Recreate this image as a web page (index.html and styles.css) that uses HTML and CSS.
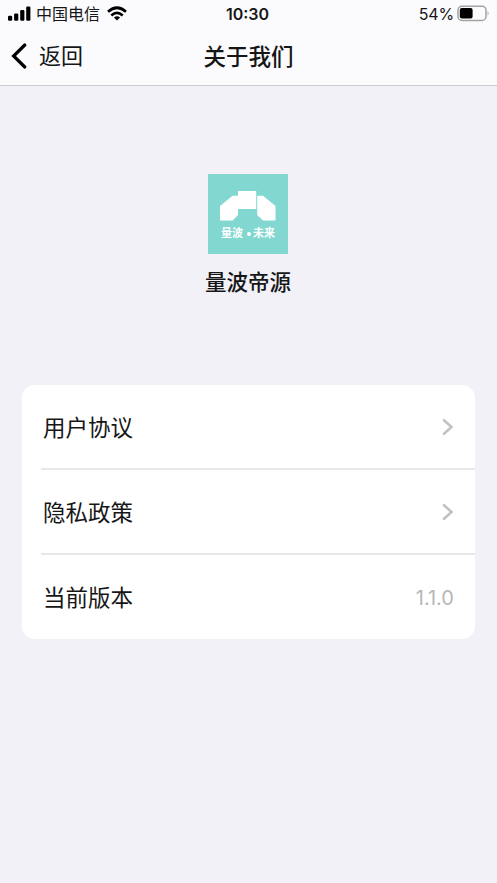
FILE: index.html
```html
<!DOCTYPE html>
<html lang="zh-CN">
<head>
<meta charset="utf-8">
<title>关于我们</title>
<link rel="stylesheet" href="styles.css">
</head>
<body>
<header class="top">
  <div class="status">
    <div class="status-left">
      <svg class="signal" width="23" height="15" viewBox="0 0 23 15"><rect x="0" y="9.8" width="4.2" height="5" rx="1.2"/><rect x="6.1" y="7.5" width="4.2" height="7.3" rx="1.2"/><rect x="12.2" y="4" width="4.2" height="10.8" rx="1.2"/><rect x="18.2" y="0.5" width="4.2" height="14.3" rx="1.2"/></svg>
      <span class="carrier">中国电信</span>
      <svg class="wifi" width="20" height="15" viewBox="0 0 20 15"><g fill="none" stroke="#000" stroke-width="2.7"><path d="M1 5.7Q10-2.2 19 5.7"/><path d="M4.3 9.4Q10 4.4 15.7 9.4"/></g><path d="M6.9 11.6Q10 9.1 13.1 11.6L10 14.6Z"/></svg>
    </div>
    <span class="time">10:30</span>
    <div class="status-right">
      <span class="percent">54%</span>
      <svg class="battery" width="33" height="17" viewBox="0 0 33 17"><rect x="1" y="1.2" width="28" height="14.2" rx="4" fill="none" stroke="#a3a3a5" stroke-width="1.5"/><rect x="2.8" y="3" width="12.8" height="10.6" rx="2"/><path d="M30.6 6Q32.6 8.3 30.6 10.6Z" fill="#a3a3a5"/></svg>
    </div>
  </div>
  <nav class="nav">
    <a class="back">
      <svg width="17" height="28" viewBox="0 0 17 28"><path d="M13.8 3L2.6 14L13.8 25" fill="none" stroke="#000" stroke-width="3.2" stroke-linecap="round" stroke-linejoin="miter"/></svg>
      <span>返回</span>
    </a>
    <h1 class="title">关于我们</h1>
  </nav>
</header>
<main>
  <section class="brand">
    <div class="logo">
      <svg width="56" height="30" viewBox="0 0 56 30" fill="#fff"><path d="M0 15L12.5 4.8H18V24L12.7 29.5H0Z"/><path d="M37.2 4.8H43L55.5 15V29.5H43L37.2 24Z"/><path d="M18 0H36.2V18H18Z"/></svg>
      <div class="logo-text"><span>量波</span><i class="dot"></i><span>未来</span></div>
    </div>
    <h2 class="name">量波帝源</h2>
  </section>
  <ul class="list">
    <li class="row"><span>用户协议</span><svg class="chevron" width="12" height="18" viewBox="0 0 12 18"><path d="M2 2.2L9.5 9L2 15.8"/></svg></li>
    <li class="row"><span>隐私政策</span><svg class="chevron" width="12" height="18" viewBox="0 0 12 18"><path d="M2 2.2L9.5 9L2 15.8"/></svg></li>
    <li class="row"><span>当前版本</span><span class="version">1.1.0</span></li>
  </ul>
</main>
</body>
</html>
```
FILE: styles.css
```css
* { box-sizing: border-box; }
body {
  margin: 0;
  min-height: 883px;
  background: #f2f1f8;
  color: #161617;
  font-family: Inter, "Noto Sans CJK SC", sans-serif;
}
.top {
  height: 86px;
  background: #fbfbfd;
  border-bottom: 1px solid #cdcdd1;
}
.status {
  display: grid;
  grid-template-columns: 1fr auto 1fr;
  align-items: center;
  height: 28px;
  padding: 0 8px 0 8px;
}
.status-left, .status-right { display: flex; align-items: center; }
.status-left svg { margin-bottom: 1px; }
.status-right { justify-content: flex-end; }
.battery { margin: 0 -1px 1px 0; }
.carrier {
  margin: 0 7px 0 5px;
  font-size: 16px;
  line-height: 28px;
}
.time {
  padding-right: 2px;
  font-size: 16px;
  font-weight: 600;
}
.percent { font-size: 16px; margin-right: 3px; letter-spacing: -0.2px; }
.nav {
  display: grid;
  grid-template-columns: 1fr auto 1fr;
  align-items: center;
  height: 57px;
}
.back {
  display: flex;
  align-items: center;
  gap: 11px;
  padding: 0 0 1px 11px;
  font-size: 22px;
  line-height: 32px;
}
.title {
  margin: 0;
  font-size: 22.5px;
  line-height: 32px;
  font-weight: 500;
}
.brand {
  display: flex;
  flex-direction: column;
  align-items: center;
  padding: 88px 1px 0 0;
}
.logo {
  display: flex;
  flex-direction: column;
  align-items: center;
  width: 80px;
  height: 80px;
  padding-top: 17px;
  background: #82d8d0;
}
.logo-text {
  display: flex;
  align-items: center;
  margin-top: 4px;
  color: #fff;
  font-size: 11px;
  line-height: 16px;
  font-weight: 700;
}
.dot {
  width: 4px;
  height: 4px;
  margin: 1px 2px 0 4px;
  border-radius: 50%;
  background: #fff;
}
.name {
  margin: 12px 0 0;
  font-size: 21.5px;
  line-height: 32px;
  font-weight: 500;
}
.list {
  margin: 87px 22px 0;
  padding: 0 0 0 19px;
  list-style: none;
  background: #fff;
  border-radius: 13px;
}
.row {
  display: flex;
  align-items: center;
  justify-content: space-between;
  height: 85px;
  padding: 0 21px 0 2px;
  border-bottom: 2px solid #e8e8ea;
  font-size: 22.5px;
}
.row > span:first-child { padding-bottom: 2px; }
.row:last-child { height: 84px; border-bottom: 0; }
.chevron { margin-top: 1px; fill: none; stroke: #c2c2c4; stroke-width: 2.6; stroke-linecap: round; }
.version { padding-top: 2px; color: #b7b7b9; font-size: 20px; }
```
